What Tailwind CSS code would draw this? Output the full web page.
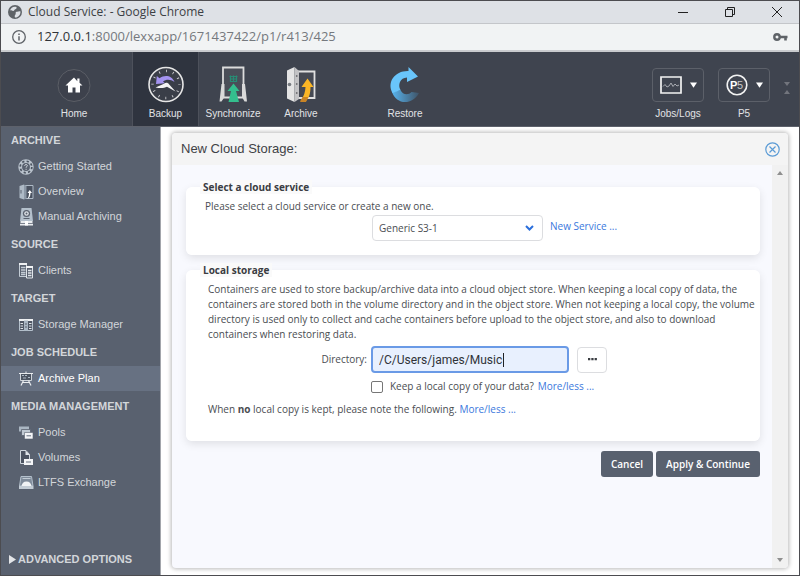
<!DOCTYPE html>
<html lang="en">
<head>
    <meta charset="UTF-8">
    <meta name="viewport" content="width=device-width, initial-scale=1.0">
    <title>Cloud Service:</title>
    <script src="https://cdn.jsdelivr.net/npm/@tailwindcss/browser@4"></script>
</head>
<body class="min-h-screen flex flex-col border border-[#4c4c50] bg-white font-['Liberation_Sans',sans-serif] text-[11px] text-[#4a4d52]">

    <!-- Window title bar -->
    <div class="flex items-center h-[23px] pl-[7px] pr-2 bg-[#dee1e6] border-b border-[#c4c6ca] font-['Open_Sans',sans-serif] text-xs text-[#3c3f44]">
        <svg class="size-[14px] mr-[6px]" viewBox="0 0 14 14">
            <circle cx="7" cy="7" r="7" fill="#5f6368"/>
            <path d="M2 5.500c1.500-.5 2 .5 3.200.4 1.300-.1.800-1.400 2-1.700 1.200-.2 1.600-1 1.300-2.200C6 1 3 2 2 5.500zM12.500 6.500c-1.500-.6-2.300.4-3.500.3-1 0-1.600.6-1.300 1.600.3.900-.6 1-.9 2-.2.800-.1 1.500.3 2.100 3 .2 5.400-2.300 5.400-6z" fill="#dee1e6"/>
        </svg>
        <span>Cloud Service: - Google Chrome</span>
        <div class="ml-auto flex items-center gap-[35px] mr-2">
            <button aria-label="Minimize"><svg class="size-3" viewBox="0 0 12 12" fill="none" stroke="#222"><path d="M1 6.500h10"/></svg></button>
            <button aria-label="Restore window"><svg class="size-3" viewBox="0 0 12 12" fill="none" stroke="#222"><path d="M1.500 3.500h7v7h-7zM3.500 3.500v-2h7v7h-2"/></svg></button>
            <button aria-label="Close window"><svg class="size-3" viewBox="0 0 12 12" fill="none" stroke="#222"><path d="M1 1l10 10M11 1L1 11"/></svg></button>
        </div>
    </div>

    <!-- Address bar -->
    <div class="flex items-center h-[28px] px-[11px] bg-[#f1f3f4] border-b-2 border-[#c9cbce] font-['Open_Sans',sans-serif] text-[13px] text-[#75797e]">
        <svg class="size-[14px] mr-[11px]" viewBox="0 0 14 14" fill="none" stroke="#5f6368">
            <circle cx="7" cy="7" r="6.300" stroke-width="1.300"/>
            <path d="M7 6.200v4.300M7 3.500v1.500" stroke-width="1.500"/>
        </svg>
        <span><span class="text-[#303338]">127.0.0.1</span>:8000/lexxapp/1671437422/p1/r413/425</span>
        <svg class="ml-auto w-[15px] h-[10px]" viewBox="0 0 15 10" fill="none" stroke="#5f6368">
            <circle cx="4" cy="5" r="2.700" stroke-width="2.400"/>
            <path d="M7 5h7.500M12.500 5v3.500" stroke-width="2.600"/>
        </svg>
    </div>

    <!-- Toolbar -->
    <header class="flex h-[75px] bg-[#3f444f] border-b border-[#5d616b] text-[10px] text-[#e2e3e6]">
        <a href="#" class="w-[131px] pl-[15px] pt-[14px] flex flex-col items-center">
            <svg class="size-10" viewBox="0 0 40 40">
                <circle cx="20" cy="19.500" r="16" fill="#3d414c" stroke="#5b5e66"/>
                <path d="M20 11.500l-8.500 8h2.500v7h4.500v-5h3v5H26v-7h2.500l-3-2.800V12.500h-2.200v2.800z" fill="#fff"/>
            </svg>
            <span>Home</span>
        </a>
        <a href="#" class="w-[67px] pt-[14px] flex flex-col items-center bg-[#2f343f] border-x border-[#4d515b]">
            <svg class="size-10" viewBox="0 0 40 40">
                <circle cx="20" cy="18.500" r="17" fill="#3a3e48" stroke="#e6e6e6" stroke-width="1.600"/>
                <circle cx="20" cy="18.500" r="13.500" fill="none" stroke="#cfcfd3" stroke-width="2.500" stroke-dasharray=".9 6.170" stroke-dashoffset=".4"/>
                <path d="M10 18l.8-8 2.700 2.300c5-4 12.500-3 15 3.700-4-3-8.500-2.800-11.500-.5l2 1.700z" fill="#a493f0"/>
                <path d="M9.500 21.500l8.500-3.800c1.800-1.500 4-1.200 5 .5l6.500 7.300-8.500-4.700c-3 1.500-7 1.500-11.500.7z" fill="#f4f4f4"/>
            </svg>
            <span>Backup</span>
        </a>
        <a href="#" class="w-[68px] pt-[14px] flex flex-col items-center">
            <svg class="size-10" viewBox="0 0 40 40">
                <path d="M10 1.500h20.500v30H10z" fill="#4a4e58" stroke="#dcdcdc" stroke-width="1.800"/>
                <path d="M8.500 18h3v13l-3 4.500H6.500zM29 18h3l2 17.500h-2.500L29 31z" fill="#d9d9d9"/>
                <path d="M20.500 17.500l-6 7.500h3.500l-2.500 11h10.500L23 25h3.500z" fill="#34bf8e"/>
                <path d="M17.500 9.500v6.500M23.500 9.500v6.500M20.500 9.500v6.500M16.500 10.500h8M17.500 13h6M18 15.500h5" stroke="#278c74" stroke-width="1.200"/>
            </svg>
            <span>Synchronize</span>
        </a>
        <a href="#" class="w-[68px] pt-[14px] flex flex-col items-center">
            <svg class="size-10" viewBox="0 0 40 40">
                <path d="M17 5.500h16.500v26.500H17z" fill="#454953" stroke="#e0e0e0" stroke-width="1.800"/>
                <path d="M6 4.500l7.500-3.500v35L6 32.500z" fill="#e4e4e4"/>
                <path d="M13.500 1l4.500 4v28l-4.500 3z" fill="#c3c3c5"/>
                <path d="M15.700 9v2M15.700 17v2M15.700 26v2" stroke="#77777b" stroke-width="1.500"/>
                <circle cx="8.500" cy="18.500" r="1.800" fill="#777b80"/>
                <path d="M26.500 12.500l-6 8.500h4c-.2 5-1.500 9-5 14h5.500c3.500-3.500 4.500-8.500 4.500-14h3z" fill="#fbb625"/>
                <path d="M21.500 31l-2.500 5h6l2.300-5z" fill="#c98426"/>
            </svg>
            <span>Archive</span>
        </a>
        <a href="#" class="w-[68px] ml-9 pt-[14px] flex flex-col items-center">
            <svg class="size-10" viewBox="0 0 40 40">
                <defs>
                    <linearGradient id="restoreFade" x1="0" y1="0" x2="1" y2="0">
                        <stop offset="0" stop-color="#58b4ee"/>
                        <stop offset="1" stop-color="#3f5468"/>
                    </linearGradient>
                </defs>
                <path d="M7 26C11 38.500 27 40 34 27l-7.500-1c-3 3.500-9 3-11-2z" fill="url(#restoreFade)"/>
                <path d="M7.500 27C1.500 16 10 4.500 23.500 5V1L33 10.500 22 16v-4.500c-7 .2-9.500 7.500-6.500 12.500z" fill="#69c5fb"/>
            </svg>
            <span>Restore</span>
        </a>
        <div class="ml-auto flex">
            <div class="w-[66px] pt-[16px] flex flex-col items-center">
                <button aria-label="Jobs and logs menu" class="w-[52px] h-[34px] mb-1 flex items-center justify-center gap-2 rounded border border-[#5c6069]">
                    <svg class="w-[22px] h-[18px]" viewBox="0 0 22 18" fill="none">
                        <path d="M1 1h20v16H1z" stroke="#f2f2f2" stroke-width="1.700"/>
                        <path d="M3 10.500l2-2 2 2.500 2-1 2-3 2 3.500 2-2.500 2 2 2-1" stroke="#a9acb2"/>
                    </svg>
                    <svg class="w-[7px] h-[6px]" viewBox="0 0 8 6"><path d="M0 0h8L4 6z" fill="#fff"/></svg>
                </button>
                <span>Jobs/Logs</span>
            </div>
            <div class="w-[66px] pt-[16px] flex flex-col items-center">
                <button aria-label="P5 menu" class="w-[52px] h-[34px] mb-1 flex items-center justify-center gap-2 rounded border border-[#5c6069]">
                    <svg class="size-[22px]" viewBox="0 0 22 22">
                        <circle cx="11" cy="11" r="9.800" fill="none" stroke="#f2f2f2" stroke-width="1.600"/>
                        <text x="4" y="15" font-size="11" font-weight="bold" fill="#fff">P</text>
                        <text x="11" y="15" font-size="11" fill="#c6c8cc">5</text>
                    </svg>
                    <svg class="w-[7px] h-[6px]" viewBox="0 0 8 6"><path d="M0 0h8L4 6z" fill="#fff"/></svg>
                </button>
                <span>P5</span>
            </div>
            <svg class="w-[20px] h-[14px] mt-[29px] mr-[2px]" viewBox="0 0 20 14" fill="#72757d"><path d="M7 1h6l-3 4zM7 13h6l-3-4z"/></svg>
        </div>
    </header>

    <div class="flex-1 flex">
        <!-- Sidebar -->
        <nav class="w-[160px] shrink-0 flex flex-col gap-[2px] bg-[#59616f] border-r border-[#a2a5ab] text-[#d3d6da]">
            <section>
                <h2 class="h-[27px] flex items-center px-[10px] font-bold">ARCHIVE</h2>
                <a href="#" class="h-[25px] flex items-center gap-1 pl-[17px]">
                    <svg class="size-4" viewBox="0 0 16 16" fill="none">
                        <circle cx="8" cy="8" r="5.800" stroke="#b9c2cc" stroke-width="3.800"/>
                        <circle cx="8" cy="8" r="5.800" stroke="#4d5562" stroke-width="1.700" stroke-dasharray="2.200 2.350"/>
                        <circle cx="8" cy="8" r="3.300" fill="#59616f"/>
                        <path d="M6.700 6.800c0-1.800 2.800-1.600 2.600 0-.1.800-1.200.8-1.200 1.900M8.100 9.800v1" stroke="#d8dee4"/>
                    </svg>
                    Getting Started
                </a>
                <a href="#" class="h-[25px] flex items-center gap-1 pl-[17px]">
                    <svg class="size-4" viewBox="0 0 16 16">
                        <path d="M7 1.500h8v13H7z" fill="#4a5260" stroke="#aebac6"/>
                        <path d="M1.500 2L6 .5v15L1.500 14z" fill="#aebac6"/>
                        <path d="M6 .5L8.500 2v12.500L6 15.500z" fill="#8c98a6"/>
                        <path d="M3 6v3.500" stroke="#59616f"/>
                        <path d="M11.800 6l-2.300 3H11c0 2.500-.5 4-1.500 6 2-1 3-3 3-6H14z" fill="#fff"/>
                    </svg>
                    Overview
                </a>
                <a href="#" class="h-[25px] flex items-center gap-1 pl-[17px]">
                    <svg class="w-4 h-[18px]" viewBox="0 0 16 18">
                        <path d="M3.500 0h10l1.500 13h-13z" fill="#b4c0cc"/>
                        <circle cx="8.500" cy="5.500" r="3.600" fill="#59616f"/>
                        <circle cx="8.500" cy="5.500" r="2.300" fill="#dfe4e9"/>
                        <circle cx="8.500" cy="5.500" r="1" fill="#59616f"/>
                        <path d="M5.500 10.500h6" stroke="#59616f"/>
                        <path d="M2.500 13h12v2h-12zM2 15.800h13v1.700H2z" fill="#e9ecef"/>
                        <path d="M7 13h3v4.500H7z" fill="#fff"/>
                    </svg>
                    Manual Archiving
                </a>
            </section>
            <section>
                <h2 class="h-[27px] flex items-center px-[10px] font-bold">SOURCE</h2>
                <a href="#" class="h-[25px] flex items-center gap-1 pl-[17px]">
                    <svg class="size-4" viewBox="0 0 16 16" fill="none">
                        <path d="M1.500 1h7v12.500h-7z" stroke="#c3ccd5"/>
                        <path d="M1 1h8" stroke="#eef0f2" stroke-width="2"/>
                        <path d="M3 4.500h4.500M3 7h4.500M3 9.500h4.500M3 11.500h4.500" stroke="#c3ccd5" stroke-width="1.300"/>
                        <path d="M8.500 3.500h6v11.500h-6z" fill="#59616f" stroke="#dfe4e9"/>
                        <path d="M8 4h7" stroke="#f3f4f6" stroke-width="2"/>
                        <path d="M10 7.500h3.500M10 10h3.500M10 12.500h3.500" stroke="#dfe4e9" stroke-width="1.400"/>
                    </svg>
                    Clients
                </a>
            </section>
            <section>
                <h2 class="h-[27px] flex items-center px-[10px] font-bold">TARGET</h2>
                <a href="#" class="h-[25px] flex items-center gap-1 pl-[17px]">
                    <svg class="size-4" viewBox="0 0 16 16" fill="none">
                        <path d="M1.500 2.500h13v11h-13z" fill="#4f5765" stroke="#b4c0cc"/>
                        <path d="M1 3h14" stroke="#eef0f2" stroke-width="2"/>
                        <path d="M6 3.500h4v10H6z" fill="#a9b6c3"/>
                        <path d="M2.500 6.500h2.500M2.500 9h2.500M2.500 11.500h2.500M11 6.500h2.500M11 9h2.500M11 11.500h2.500" stroke="#dfe4e9"/>
                        <path d="M7 7h2M7 10h2" stroke="#59616f"/>
                    </svg>
                    Storage Manager
                </a>
            </section>
            <section>
                <h2 class="h-[27px] flex items-center px-[10px] font-bold">JOB SCHEDULE</h2>
                <a href="#" aria-current="page" class="h-[25px] flex items-center gap-1 pl-[17px] bg-[#677182] text-white">
                    <svg class="size-4" viewBox="0 0 16 16" fill="none">
                        <path d="M2.500 2.500h11v7h-11z" fill="#4d5562" stroke="#cfd5db"/>
                        <path d="M1 2.500h14M8 .5v2" stroke="#e9ecef"/>
                        <path d="M4 4.500h2M7 4.500h2M10 6.500h2M5 7h3" stroke="#aebac6"/>
                        <path d="M5.500 9.500L3 14.500M10.500 9.500L13 14.500M4.500 11.500h7" stroke="#e9ecef" stroke-width="1.200"/>
                    </svg>
                    Archive Plan
                </a>
            </section>
            <section>
                <h2 class="h-[27px] flex items-center px-[10px] font-bold">MEDIA MANAGEMENT</h2>
                <a href="#" class="h-[25px] flex items-center gap-1 pl-[17px]">
                    <svg class="size-4" viewBox="0 0 16 16">
                        <path d="M1 1.500h10v5H1z" fill="#aab6c2"/>
                        <path d="M3.500 4.500h9v6h-9z" fill="#c0c9d2" stroke="#59616f" stroke-width=".8"/>
                        <path d="M6.500 7.500H15v6.500H6.500z" fill="#f4f5f7" stroke="#59616f" stroke-width=".6"/>
                        <path d="M8.500 10.800h4.500" stroke="#66707f"/>
                    </svg>
                    Pools
                </a>
                <a href="#" class="h-[25px] flex items-center gap-1 pl-[17px]">
                    <svg class="size-4" viewBox="0 0 16 16">
                        <path d="M2.500.5H8l3.500 4V13.500h-9z" fill="#4b5361" stroke="#cfd6dd"/>
                        <path d="M7.500.5v4.500h4.500z" fill="#dfe4e9"/>
                        <path d="M6 9h9v6H6z" fill="#f4f5f7"/>
                        <path d="M8 12h5" stroke="#66707f"/>
                    </svg>
                    Volumes
                </a>
                <a href="#" class="h-[25px] flex items-center gap-1 pl-[17px]">
                    <svg class="size-4" viewBox="0 0 16 16">
                        <path d="M3 1.500h10.500l1.500 9.500H1.500z" fill="#7f8b9a" stroke="#b4c0cc"/>
                        <path d="M1 11h14.500v3H1z" fill="#c3ccd5"/>
                        <path d="M3.500 11c.5-2.500 2-4.500 5-4.500s4.500 2 5 4.500z" fill="#f1f3f5"/>
                        <path d="M4.500 3.500h8" stroke="#c3ccd5"/>
                    </svg>
                    LTFS Exchange
                </a>
            </section>
            <button class="mt-auto mb-[6px] h-[20px] flex items-center gap-[2px] pl-2 font-bold">
                <svg class="w-[7px] h-[9px]" viewBox="0 0 7 9"><path d="M0 0l7 4.500L0 9z" fill="#e3e5e8"/></svg>
                ADVANCED OPTIONS
            </button>
        </nav>

        <!-- Dialog -->
        <main class="flex-1 min-w-0 flex pl-[11px] pr-[11px] pt-[6px] pb-[7px]">
            <div class="flex-1 min-w-0 flex flex-col rounded bg-[#f8f9fe] shadow-[0_0_4px_1px_rgba(0,0,0,0.28)]">
                <div class="flex items-center justify-between h-[32px] pl-[9px] pr-2 rounded-t bg-[#f4f4f4]">
                    <h1 class="text-[13px] text-[#3f4246]">New Cloud Storage:</h1>
                    <button aria-label="Close">
                        <svg class="size-[15px]" viewBox="0 0 15 15" fill="none" stroke="#5b9bd5">
                            <circle cx="7.500" cy="7.500" r="6.700" stroke-width="1.200"/>
                            <path d="M4.500 4.500l6 6M10.500 4.500l-6 6" stroke-width="1.200"/>
                        </svg>
                    </button>
                </div>
                <div class="flex-1 flex">
                    <form class="flex-1 min-w-0 pl-[14px] pr-3 pt-[15px] font-['Open_Sans',sans-serif] text-[10px] leading-[15px]">
                        <fieldset class="min-w-0 h-[75px] rounded-md bg-white shadow-[0_3px_8px_rgba(0,0,0,0.1)]">
                            <legend class="ml-[14px] px-[3px] leading-[14px] bg-[#fafafa] font-bold text-[#3a3d42]">Select a cloud service</legend>
                            <div class="pl-[19px] pt-[5px]">
                                <label for="service">Please select a cloud service or create a new one.</label>
                            </div>
                            <div class="pl-[186px] pt-[1px] flex gap-[7px]">
                                <div class="grid w-[171px]">
                                    <select id="service" class="col-start-1 row-start-1 h-[26px] pl-[6px] appearance-none rounded border border-[#dcdde0] bg-white">
                                        <option>Generic S3-1</option>
                                    </select>
                                    <svg class="col-start-1 row-start-1 self-center justify-self-end mr-[9px] w-[9px] h-[6px] pointer-events-none" viewBox="0 0 9 6" fill="none"><path d="M1 1l3.500 3.500L8 1" stroke="#2b6fdc" stroke-width="2"/></svg>
                                </div>
                                <a href="#" class="pt-1 text-[#3b78dd]">New Service ...</a>
                            </div>
                        </fieldset>

                        <fieldset class="min-w-0 mt-2 pb-[24px] rounded-md bg-white shadow-[0_3px_8px_rgba(0,0,0,0.1)]">
                            <legend class="ml-[14px] px-[3px] leading-[14px] bg-[#fafafa] font-bold text-[#3a3d42]">Local storage</legend>
                            <p class="pl-[22px] pt-[5px] whitespace-nowrap">
                                Containers are used to store backup/archive data into a cloud object store. When keeping a local copy of data, the<br>
                                containers are stored both in the volume directory and in the object store. When not keeping a local copy, the volume<br>
                                directory is used only to collect and cache containers before upload to the object store, and also to download<br>
                                containers when restoring data.
                            </p>
                            <div class="flex items-center pt-1">
                                <label for="directory" class="w-[181px] mr-1 text-right">Directory:</label>
                                <div class="relative">
                                    <input id="directory" type="text" value="/C/Users/james/Music" class="w-[198px] h-[27px] px-[6px] rounded border-2 border-[#6a9ae6] bg-[#e8f0fe] font-[Roboto,sans-serif] text-xs text-[#303338] outline-none">
                                    <span id="caret" class="absolute left-[132px] top-[7px] w-px h-[14px] bg-[#202124]"></span>
                                </div>
                                <button type="button" aria-label="Browse" class="ml-2 w-[30px] h-[26px] flex items-center justify-center rounded border border-[#dcdde0] bg-white">
                                    <svg class="w-[9px] h-[3px]" viewBox="0 0 9 3" fill="#3a3d42"><path d="M0 0h2.300v2.300H0zM3.300 0h2.300v2.300H3.300zM6.600 0h2.300v2.300H6.600z"/></svg>
                                </button>
                            </div>
                            <div class="flex items-center pl-[185px] pt-[6px]">
                                <input id="keep" type="checkbox" class="size-3 mr-[7px] appearance-none rounded-xs border border-[#767676] bg-white">
                                <label for="keep">Keep a local copy of your data?</label>
                                <a href="#" class="ml-1 text-[#3b78dd]">More/less ...</a>
                            </div>
                            <p class="pl-[22px] pt-2">When <b>no</b> local copy is kept, please note the following. <a href="#" class="text-[#3b78dd]">More/less ...</a></p>
                        </fieldset>

                        <div class="flex justify-end gap-[3px] pt-[10px] font-semibold text-white">
                            <button type="button" class="w-[52px] h-[26px] rounded-[3px] bg-[#59616f]">Cancel</button>
                            <button type="submit" class="w-[104px] h-[26px] rounded-[3px] bg-[#59616f]">Apply &amp; Continue</button>
                        </div>
                    </form>
                    <div class="w-4 shrink-0 flex flex-col items-center justify-between py-[6px] rounded-br bg-[#f1f1f1]">
                        <svg class="w-[6px] h-1" viewBox="0 0 6 4"><path d="M0 4h6L3 0z" fill="#8f8f8f"/></svg>
                        <svg class="w-[6px] h-1" viewBox="0 0 6 4"><path d="M0 0h6L3 4z" fill="#8f8f8f"/></svg>
                    </div>
                </div>
            </div>
        </main>
    </div>

    <script>
        // The drawn caret gives way to the browser's own once the field is used
        const directory = document.getElementById("directory");
        directory.addEventListener("focus", function() {
            document.getElementById("caret").hidden = true;
        });
    </script>
</body>
</html>
